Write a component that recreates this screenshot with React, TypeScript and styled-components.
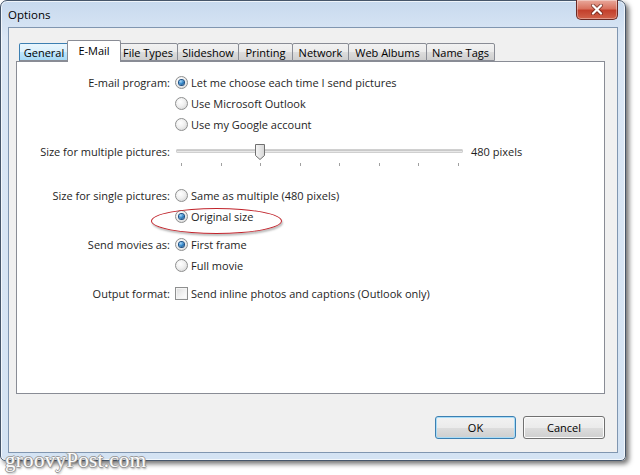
import styled, { createGlobalStyle } from 'styled-components'

const GlobalStyle = createGlobalStyle`
  html, body {
    margin: 0;
    padding: 0;
    background: #fff;
  }
  body {
    font-family: "Segoe UI", "Open Sans", sans-serif;
    font-size: 11px;
    color: #1e1e1e;
  }
`

const Page = styled.div`
  width: 640px;
  height: 475px;
  position: relative;
  overflow: hidden;
  background: #fff;
`

const Window = styled.div`
  width: 626px;
  height: 461px;
  box-sizing: border-box;
  border: 1px solid #46566a;
  border-radius: 7px 7px 5px 5px;
  background: linear-gradient(180deg, #c7d9ee 0%, #dbe7f5 8%, #d4e3f3 100%);
  box-shadow: 3px 3px 5px rgba(0, 0, 0, 0.55), inset 0 0 0 1px rgba(255, 255, 255, 0.7);
  padding: 0 7px 7px;
  display: flex;
  flex-direction: column;
`

const TitleBar = styled.div`
  height: 27px;
  display: flex;
  align-items: flex-start;
`

const Title = styled.div`
  padding-top: 6px;
  font-size: 11.5px;
  color: #000;
`

const CloseButton = styled.div`
  margin-left: auto;
  margin-top: -1px;
  width: 42px;
  height: 20px;
  box-sizing: border-box;
  border: 1px solid #6b2a24;
  border-top: none;
  border-radius: 0 0 5px 5px;
  background: linear-gradient(180deg, #e9a99c 0%, #d9725f 45%, #c3402c 55%, #d1624a 100%);
  box-shadow: inset 0 0 0 1px rgba(255, 255, 255, 0.35);
  display: flex;
  align-items: center;
  justify-content: center;
`

const Client = styled.div`
  flex: 1;
  box-sizing: border-box;
  border: 1px solid #8096b0;
  background: #f0f0f0;
  padding: 12px 12px 13px 7px;
  display: flex;
  flex-direction: column;
`

const TabStrip = styled.div`
  height: 21px;
  margin-left: 3px;
  display: flex;
  align-items: flex-end;
  position: relative;
  z-index: 1;
`

const Tab = styled.div<{ $w: number; $active?: boolean; $hover?: boolean }>`
  width: ${p => p.$w}px;
  box-sizing: border-box;
  height: ${p => (p.$active ? 22 : 18)}px;
  margin-bottom: ${p => (p.$active ? -1 : 0)}px;
  margin-left: ${p => (p.$active ? -2 : -1)}px;
  margin-right: ${p => (p.$active ? -2 : 0)}px;
  position: relative;
  z-index: ${p => (p.$active ? 2 : 0)};
  border: 1px solid ${p => (p.$hover ? '#3c7fb1' : '#898c95')};
  border-bottom: ${p => (p.$active ? 'none' : '1px solid #898c95')};
  border-radius: 2px 2px 0 0;
  background: ${p =>
    p.$active
      ? '#fff'
      : p.$hover
      ? 'linear-gradient(180deg, #eaf6fd 0%, #d9f0fc 50%, #bee6fd 51%, #a7d9f5 100%)'
      : 'linear-gradient(180deg, #f2f2f2 0%, #ebebeb 50%, #dddddd 51%, #cfcfcf 100%)'};
  display: flex;
  align-items: ${p => (p.$active ? 'flex-start' : 'center')};
  padding-top: ${p => (p.$active ? 2 : 0)}px;
  justify-content: center;
  color: #000;
  font-size: 11px;
  white-space: nowrap;
  &:first-child {
    margin-left: 0;
  }
`

const Panel = styled.div`
  height: 333px;
  box-sizing: border-box;
  border: 1px solid #898c95;
  background: #fff;
  padding-top: 10px;
  display: flex;
  flex-direction: column;
  position: relative;
`

const Row = styled.div<{ $gap?: number }>`
  display: grid;
  grid-template-columns: 153px 1fr;
  column-gap: 5px;
  height: 21px;
  align-items: center;
  margin-top: ${p => p.$gap ?? 0}px;
`

const Label = styled.div`
  text-align: right;
  white-space: nowrap;
  color: #1e1e1e;
`

const Option = styled.div`
  display: flex;
  align-items: center;
  gap: 3px;
  white-space: nowrap;
`

const Radio = styled.span<{ $on?: boolean }>`
  width: 13px;
  height: 13px;
  box-sizing: border-box;
  border-radius: 50%;
  border: 1px solid #8e8f8f;
  background: radial-gradient(circle at 40% 35%, #ffffff 0%, #f0f0f0 45%, #cfcfcf 100%);
  display: flex;
  align-items: center;
  justify-content: center;
  &::after {
    content: '';
    display: ${p => (p.$on ? 'block' : 'none')};
    width: 5px;
    height: 5px;
    border-radius: 50%;
    background: radial-gradient(circle at 35% 30%, #a9d6f5 0%, #3a8ed0 45%, #0f3c6e 100%);
    box-shadow: 0 0 0 1px #1b4f85;
  }
`

const Check = styled.span`
  width: 13px;
  height: 13px;
  box-sizing: border-box;
  border: 1px solid #8e8f8f;
  background: linear-gradient(135deg, #dcdcdc 0%, #f4f4f4 60%, #ffffff 100%);
  box-shadow: inset 0 0 0 1px #f4f4f4;
`

const SliderRow = styled.div`
  display: grid;
  grid-template-columns: 153px 1fr;
  column-gap: 6px;
  margin-top: 5px;
  height: 22px;
  align-items: center;
`

const SliderWrap = styled.div`
  display: flex;
  align-items: center;
  gap: 8px;
`

const Track = styled.div`
  width: 287px;
  height: 22px;
  position: relative;
  &::before {
    content: '';
    position: absolute;
    left: 0;
    right: 0;
    top: 9px;
    height: 4px;
    border-radius: 1px;
    background: linear-gradient(180deg, #b4b4b4 0%, #dedede 50%, #f2f2f2 100%);
    border: 1px solid #d0d0d0;
    box-sizing: border-box;
  }
`

const Thumb = styled.svg`
  position: absolute;
  top: 3px;
`

const Ticks = styled.div`
  margin-left: 164px;
  width: 278px;
  height: 5px;
  display: flex;
  justify-content: space-between;
`

const Tick = styled.span`
  width: 1px;
  height: 3px;
  background: #a0a0a0;
  margin-top: 1px;
`

const Ellipse = styled.div`
  position: absolute;
  left: 134px;
  top: 146px;
  width: 129px;
  height: 24px;
  border: 1.5px solid #c0232b;
  border-radius: 50%;
  box-shadow: 1px 2px 2px rgba(0, 0, 0, 0.25);
`

const ButtonRow = styled.div`
  margin-top: 22px;
  display: flex;
  justify-content: flex-end;
  gap: 7px;
`

const Button = styled.div<{ $default?: boolean }>`
  width: ${p => (p.$default ? 81 : 82)}px;
  height: 23px;
  box-sizing: border-box;
  border: 1px solid ${p => (p.$default ? '#3c7fb1' : '#707070')};
  border-radius: 3px;
  background: linear-gradient(180deg, #f2f2f2 0%, #ebebeb 50%, #dddddd 51%, #cfcfcf 100%);
  box-shadow: inset 0 0 0 1px ${p => (p.$default ? '#a8dcf7' : '#fcfcfc')};
  display: flex;
  align-items: center;
  justify-content: center;
  color: #000;
`

const Watermark = styled.div`
  position: absolute;
  left: 5px;
  top: 448px;
  font-family: "Liberation Serif", serif;
  font-size: 21px;
  letter-spacing: 0.3px;
  color: #fbfbfb;
  text-shadow: -1px 0 #9a9a9a, 1px 0 #9a9a9a, 0 -1px #9a9a9a, 0 1px #9a9a9a, 1px 2px 2px rgba(0, 0, 0, 0.35);
`

const tabs = [
  { name: 'General', w: 50, hover: true },
  { name: 'E-Mail', w: 54, active: true },
  { name: 'File Types', w: 60 },
  { name: 'Slideshow', w: 62 },
  { name: 'Printing', w: 55 },
  { name: 'Network', w: 57 },
  { name: 'Web Albums', w: 79 },
  { name: 'Name Tags', w: 69 },
]

const App = () => {
  return (
    <Page>
      <GlobalStyle />
      <Window>
        <TitleBar>
          <Title>Options</Title>
          <CloseButton>
            <svg width="12" height="11" viewBox="0 0 12 11">
              <path d="M2 1.5 L10 9.5 M10 1.5 L2 9.5" stroke="#4a1610" strokeWidth="4" strokeLinecap="round" opacity="0.55" />
              <path d="M2 1.5 L10 9.5 M10 1.5 L2 9.5" stroke="#ffffff" strokeWidth="2.2" strokeLinecap="round" />
            </svg>
          </CloseButton>
        </TitleBar>

        <Client>
          <TabStrip>
            {tabs.map(t => (
              <Tab key={t.name} $w={t.w} $active={t.active} $hover={t.hover}>
                {t.name}
              </Tab>
            ))}
          </TabStrip>

          <Panel>
            <Row>
              <Label>E-mail program:</Label>
              <Option><Radio $on />Let me choose each time I send pictures</Option>
            </Row>
            <Row>
              <span />
              <Option><Radio />Use Microsoft Outlook</Option>
            </Row>
            <Row>
              <span />
              <Option><Radio />Use my Google account</Option>
            </Row>

            <SliderRow>
              <Label>Size for multiple pictures:</Label>
              <SliderWrap>
                <Track>
                  <Thumb width="12" height="18" viewBox="0 0 12 18" style={{ left: 78 }}>
                    <defs>
                      <linearGradient id="thumb" x1="0" x2="1" y1="0" y2="0">
                        <stop offset="0" stopColor="#f6f6f6" />
                        <stop offset="1" stopColor="#d6d6d6" />
                      </linearGradient>
                    </defs>
                    <path d="M1.5 1.5 H10.5 V12.5 L6 16.5 L1.5 12.5 Z" fill="url(#thumb)" stroke="#707070" strokeLinejoin="round" />
                  </Thumb>
                </Track>
                <span>480 pixels</span>
              </SliderWrap>
            </SliderRow>
            <Ticks>
              {Array.from({ length: 8 }).map((_, i) => (
                <Tick key={i} />
              ))}
            </Ticks>

            <Row $gap={18}>
              <Label>Size for single pictures:</Label>
              <Option><Radio />Same as multiple (480 pixels)</Option>
            </Row>
            <Row>
              <span />
              <Option><Radio $on />Original size</Option>
            </Row>
            <Row $gap={7}>
              <Label>Send movies as:</Label>
              <Option><Radio $on />First frame</Option>
            </Row>
            <Row>
              <span />
              <Option><Radio />Full movie</Option>
            </Row>
            <Row $gap={7}>
              <Label>Output format:</Label>
              <Option><Check />Send inline photos and captions (Outlook only)</Option>
            </Row>

            <Ellipse />
          </Panel>

          <ButtonRow>
            <Button $default>OK</Button>
            <Button>Cancel</Button>
          </ButtonRow>
        </Client>
      </Window>
      <Watermark>groovyPost.com</Watermark>
    </Page>
  )
}

export default App
